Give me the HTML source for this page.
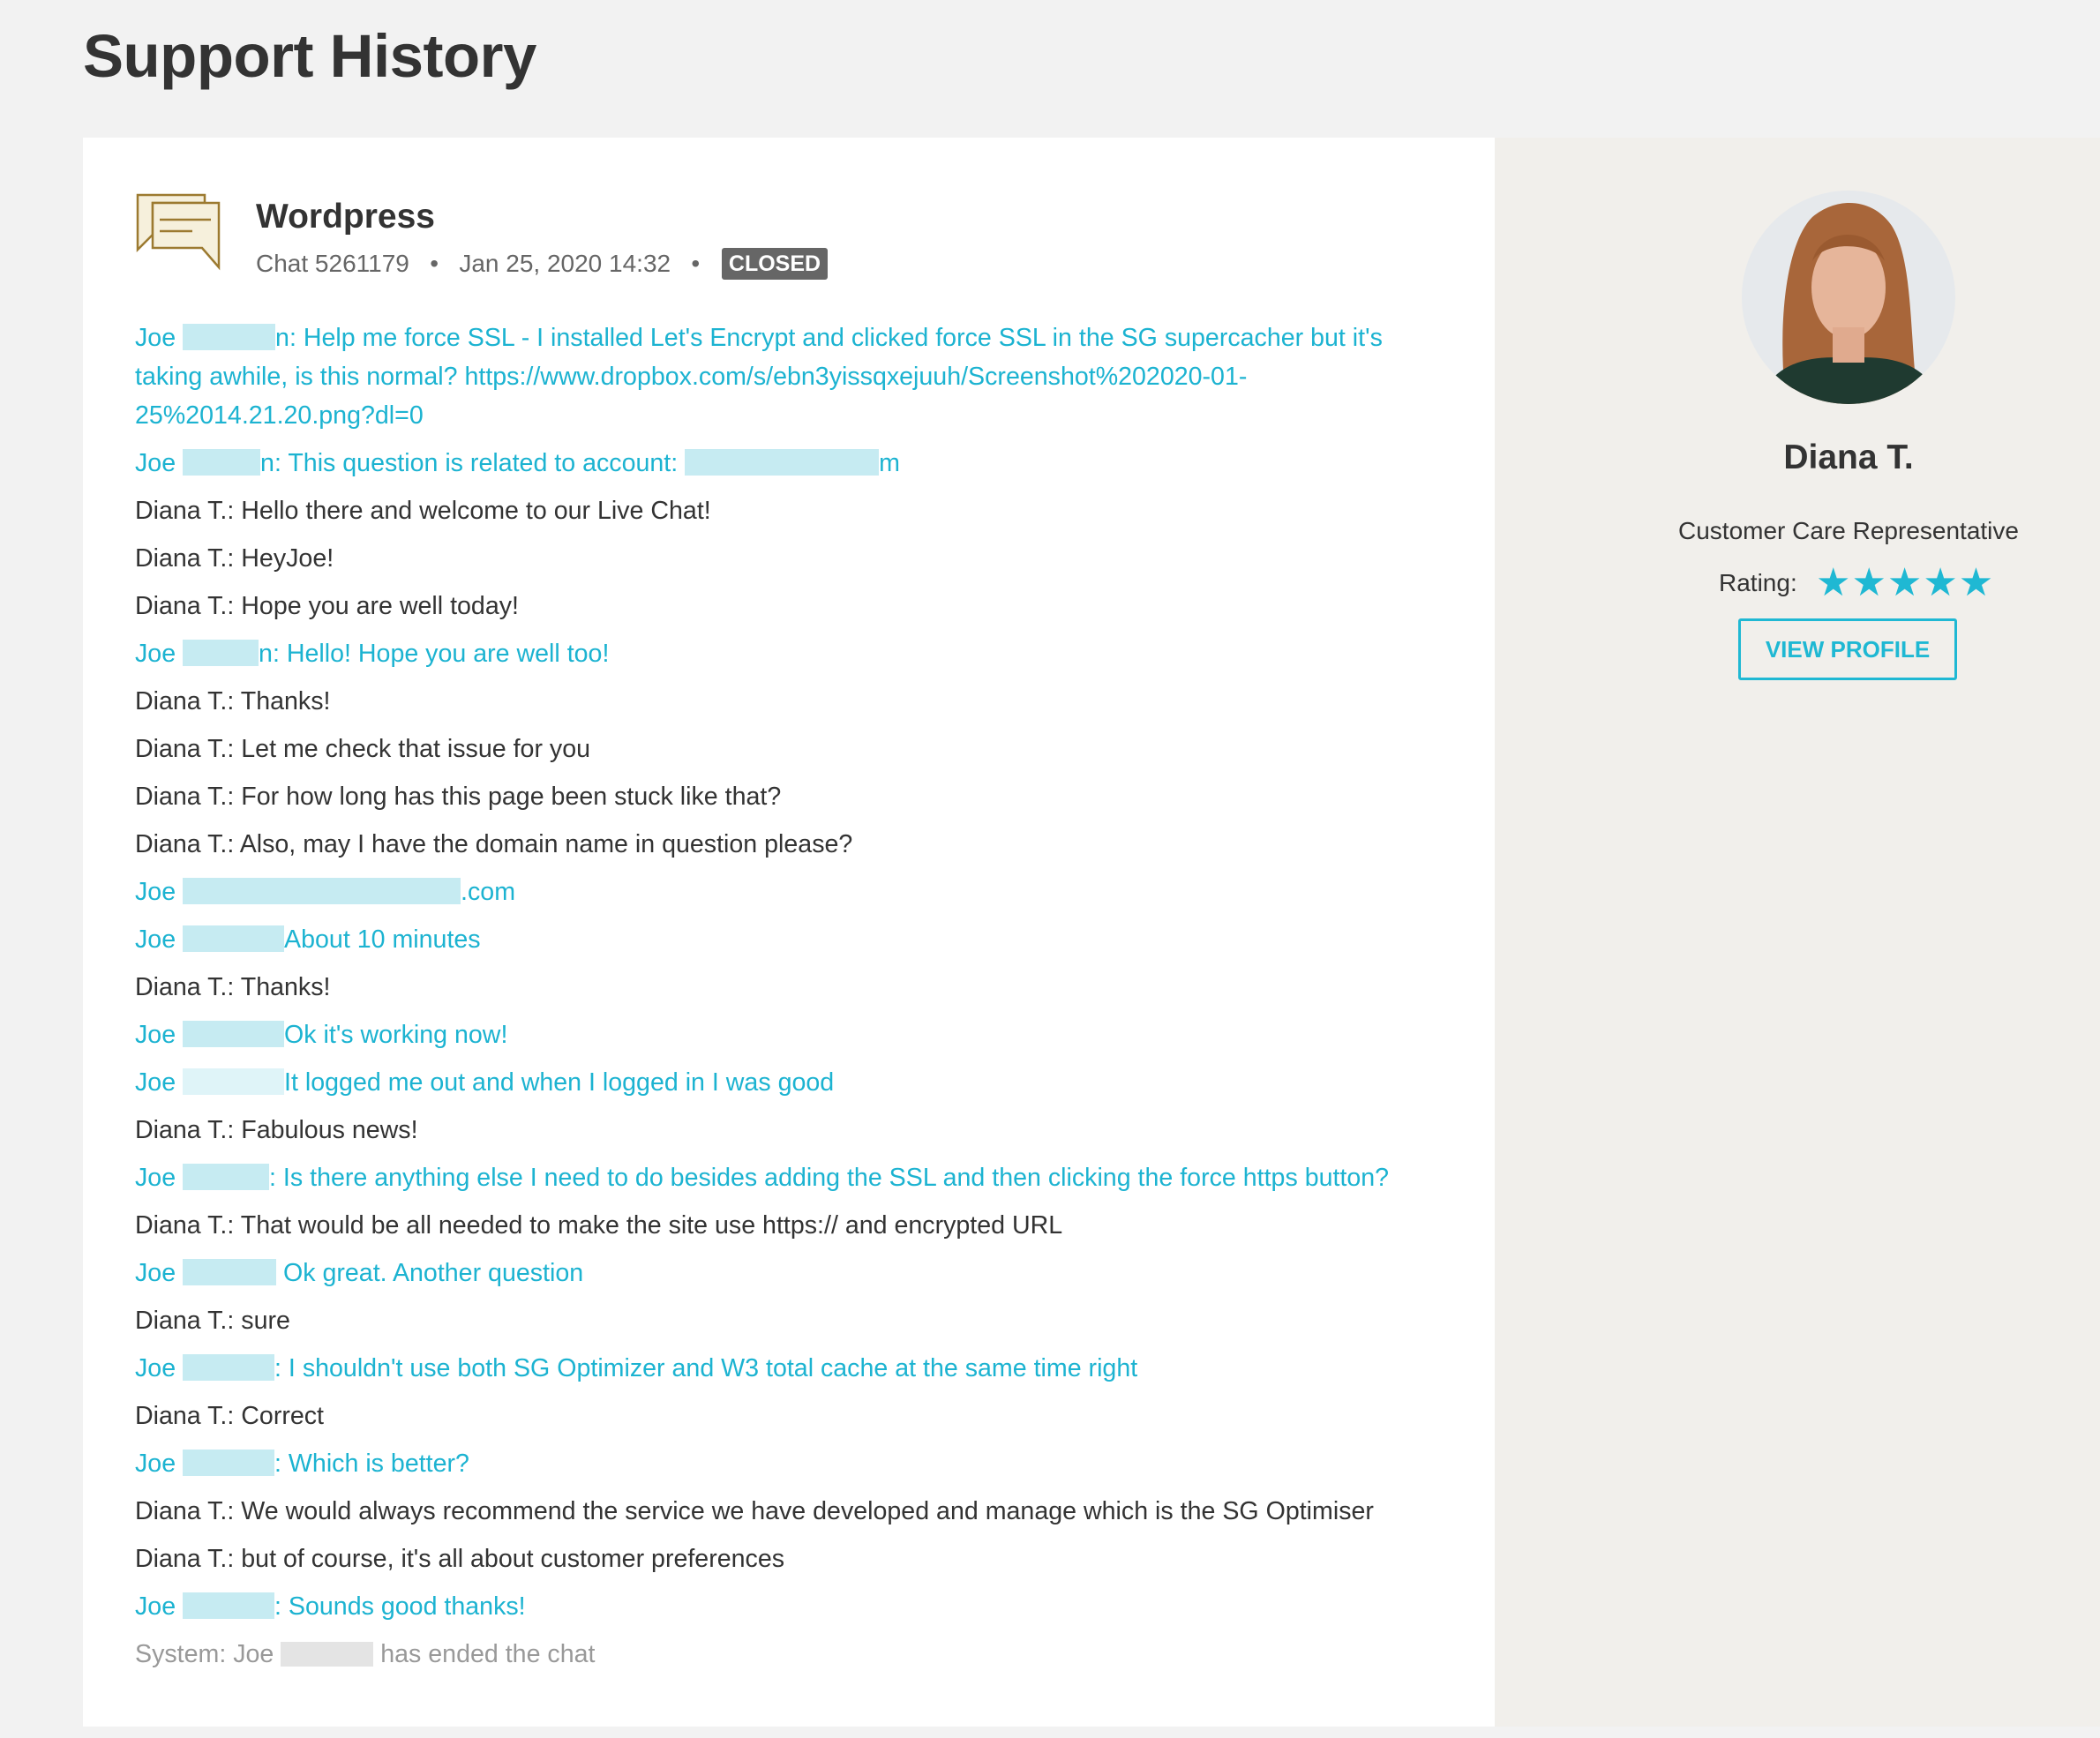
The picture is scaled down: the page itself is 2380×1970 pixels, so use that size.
<!DOCTYPE html>
<html><head><meta charset="utf-8"><style>
html,body{margin:0;padding:0}
body{width:2380px;height:1970px;background:#f2f2f2;font-family:"Liberation Sans",sans-serif;position:relative;overflow:hidden;color:#333}
h1{position:absolute;left:94px;top:24px;margin:0;font-size:69px;font-weight:bold;color:#333;letter-spacing:-0.5px}
.card{position:absolute;left:94px;top:156px;width:1600px;height:1801px;background:#fff}
.side{position:absolute;left:1694px;top:156px;width:686px;height:1801px;background:#f1efeb}
.msgs{position:absolute;left:153px;top:361px;font-size:28.6px;line-height:44px}
.m{margin-bottom:10px;white-space:nowrap;color:#333}
.j{color:#1cb3d1}
.s{color:#999}
.b{display:inline-block;height:30px;vertical-align:-5px;background:#c6ebf2}
.bg{display:inline-block;height:28px;vertical-align:-5px;background:#e4e4e4}
</style></head><body>
<h1>Support History</h1>
<div class="card"></div>
<div class="side"></div>
<svg style="position:absolute;left:150px;top:215px" width="104" height="95" viewBox="0 0 104 95">
<path d="M6 68 V6 H82 V15 H23 V51 Z" fill="#f6f0dc" stroke="#9c7a30" stroke-width="2.5" stroke-linejoin="miter"/>
<path d="M23 15 H98 V88 L79 66 H23 Z" fill="#f6f0dc" stroke="#9c7a30" stroke-width="2.5"/>
<line x1="31" y1="34" x2="89" y2="34" stroke="#9c7a30" stroke-width="2.5"/>
<line x1="31" y1="47" x2="68" y2="47" stroke="#9c7a30" stroke-width="2.5"/>
</svg>
<div style="position:absolute;left:290px;top:224px;font-size:39px;font-weight:bold;color:#333">Wordpress</div>
<div style="position:absolute;left:290px;top:281px;font-size:28px;color:#666;line-height:36px;white-space:nowrap">Chat 5261179 &nbsp;&nbsp;•&nbsp;&nbsp; Jan 25, 2020 14:32 &nbsp;&nbsp;•</div>
<div style="position:absolute;left:818px;top:281px;width:120px;height:36px;background:#666;border-radius:3px;color:#fff;font-weight:bold;font-size:25px;line-height:36px;text-align:center">CLOSED</div>
<div class="msgs">
<div class="m j">Joe <span class="b" style="width:105px"></span>n: Help me force SSL - I installed Let's Encrypt and clicked force SSL in the SG supercacher but it's<br>taking awhile, is this normal? https://www.dropbox.com/s/ebn3yissqxejuuh/Screenshot%202020-01-<br>25%2014.21.20.png?dl=0</div>
<div class="m j">Joe <span class="b" style="width:88px"></span>n: This question is related to account: <span class="b" style="width:220px"></span>m</div>
<div class="m">Diana T.: Hello there and welcome to our Live Chat!</div>
<div class="m">Diana T.: HeyJoe!</div>
<div class="m">Diana T.: Hope you are well today!</div>
<div class="m j">Joe <span class="b" style="width:86px"></span>n: Hello! Hope you are well too!</div>
<div class="m">Diana T.: Thanks!</div>
<div class="m">Diana T.: Let me check that issue for you</div>
<div class="m">Diana T.: For how long has this page been stuck like that?</div>
<div class="m">Diana T.: Also, may I have the domain name in question please?</div>
<div class="m j">Joe <span class="b" style="width:315px"></span>.com</div>
<div class="m j">Joe <span class="b" style="width:115px"></span>About 10 minutes</div>
<div class="m">Diana T.: Thanks!</div>
<div class="m j">Joe <span class="b" style="width:115px"></span>Ok it's working now!</div>
<div class="m j">Joe <span class="b" style="width:115px;background:#dff4f8"></span>It logged me out and when I logged in I was good</div>
<div class="m">Diana T.: Fabulous news!</div>
<div class="m j">Joe <span class="b" style="width:98px"></span>: Is there anything else I need to do besides adding the SSL and then clicking the force https button?</div>
<div class="m">Diana T.: That would be all needed to make the site use https:// and encrypted URL</div>
<div class="m j">Joe <span class="b" style="width:106px"></span> Ok great. Another question</div>
<div class="m">Diana T.: sure</div>
<div class="m j">Joe <span class="b" style="width:104px"></span>: I shouldn't use both SG Optimizer and W3 total cache at the same time right</div>
<div class="m">Diana T.: Correct</div>
<div class="m j">Joe <span class="b" style="width:104px"></span>: Which is better?</div>
<div class="m">Diana T.: We would always recommend the service we have developed and manage which is the SG Optimiser</div>
<div class="m">Diana T.: but of course, it's all about customer preferences</div>
<div class="m j">Joe <span class="b" style="width:104px"></span>: Sounds good thanks!</div>
<div class="m s">System: Joe <span class="bg" style="width:105px"></span> has ended the chat</div>
</div>
<svg style="position:absolute;left:1974px;top:216px" width="242" height="242" viewBox="0 0 242 242">
<defs><clipPath id="c"><circle cx="121" cy="121" r="121"/></clipPath></defs>
<g clip-path="url(#c)">
<rect width="242" height="242" fill="#e6e9ec"/>
<path d="M50 242 C40 150 50 60 80 30 C110 5 150 10 170 40 C195 80 190 170 200 242 Z" fill="#a8663a"/>
<ellipse cx="121" cy="110" rx="42" ry="58" fill="#e6b59a"/>
<path d="M80 80 C90 40 150 40 162 80 C150 60 95 55 80 80Z" fill="#9a5a30"/>
<path d="M20 242 C30 200 70 185 121 190 C175 185 215 200 225 242 Z" fill="#1f3a30"/>
<rect x="103" y="155" width="36" height="40" fill="#e0aa8e"/>
</g></svg>
<div style="position:absolute;left:1870px;top:497px;width:450px;text-align:center;font-size:39px;font-weight:bold;color:#333">Diana T.</div>
<div style="position:absolute;left:1820px;top:586px;width:550px;text-align:center;font-size:28px;color:#333">Customer Care Representative</div>
<div style="position:absolute;left:1948px;top:645px;font-size:28px;color:#333">Rating:</div>
<div style="position:absolute;left:2058px;top:636px;font-size:44px;color:#1fb8d3;letter-spacing:1px;line-height:50px">★★★★★</div>
<div style="position:absolute;left:1970px;top:701px;width:242px;height:64px;border:3px solid #1fb8d3;border-radius:3px;color:#1fb8d3;font-weight:bold;font-size:26px;line-height:64px;text-align:center">VIEW PROFILE</div>
</body></html>
